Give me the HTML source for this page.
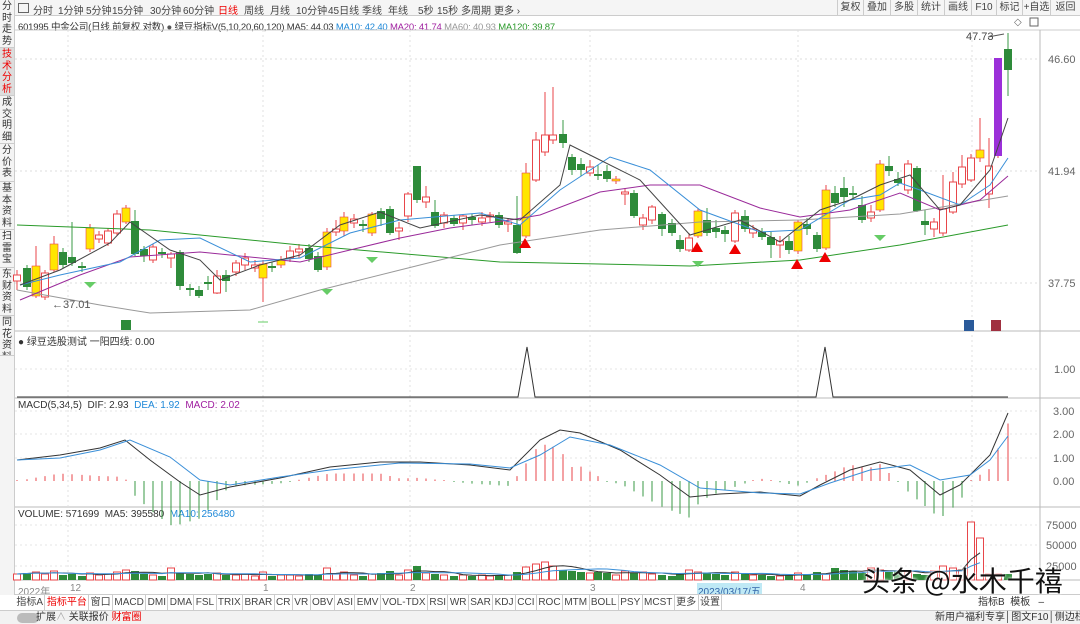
<!DOCTYPE html>
<html><head><meta charset="utf-8">
<style>
*{margin:0;padding:0;box-sizing:border-box}
body{width:1080px;height:624px;overflow:hidden;background:#fff;font-family:"Liberation Sans","Noto Sans CJK SC",sans-serif;font-size:10px;color:#333;position:relative}
.abs{position:absolute;white-space:nowrap}
#side{position:absolute;left:0;top:0;width:15px;height:595px;background:#f4f4f4;border-right:1px solid #ccc}
#side div{font-size:10px;line-height:11.5px;width:14px;text-align:center;color:#333;border-bottom:1px solid #ccc;padding-top:1px;overflow:hidden}
#top{position:absolute;left:15px;top:0;width:1065px;height:16px;background:#f5f5f5;border-bottom:1px solid #ccc}
#top span{position:absolute;top:2px;font-size:10px;color:#444;white-space:nowrap}
.btn{position:absolute;top:0;height:16px;border-left:1px solid #ccc;font-size:10px;line-height:16px;text-align:center;color:#444;white-space:nowrap;overflow:hidden}
#bot1{position:absolute;left:15px;top:594px;width:1065px;height:16px;background:#fff;border-top:1px solid #ccc}
#bot1 span{float:left;border-right:1px solid #ccc;padding:0 1.4px;line-height:15px;font-size:10px;color:#444}
#bot2{position:absolute;left:0;top:610px;width:1080px;height:14px;background:#f2f2f2;border-top:1px solid #ccc}
</style></head><body>
<div id="side">
<div style="height:48px">分时走势</div>
<div style="height:48px;color:#e00;background:#ddd">技术分析</div>
<div style="height:48px">成交明细</div>
<div style="height:38px">分价表</div>
<div style="height:48px">基本资料</div>
<div style="height:38px">扫雷宝</div>
<div style="height:48px">东财资料</div>
<div style="height:40px">同花资料</div>
</div>
<div id="top">
<span style="left:3px;top:3px;width:11px;height:10px;border:1px solid #666"></span>
<span style="left:18px">分时</span><span style="left:43px">1分钟</span><span style="left:71px">5分钟</span><span style="left:97px">15分钟</span><span style="left:135px">30分钟</span><span style="left:168px">60分钟</span><span style="left:203px;color:#e00">日线</span><span style="left:229px">周线</span><span style="left:255px">月线</span><span style="left:281px">10分钟</span><span style="left:313px">45日线</span><span style="left:347px">季线</span><span style="left:373px">年线</span><span style="left:403px">5秒</span><span style="left:422px">15秒</span><span style="left:446px">多周期</span><span style="left:479px">更多 ›</span>
<div class="btn" style="left:822px;width:26px">复权</div><div class="btn" style="left:848px;width:27px">叠加</div><div class="btn" style="left:875px;width:27px">多股</div><div class="btn" style="left:902px;width:27px">统计</div><div class="btn" style="left:929px;width:27px">画线</div><div class="btn" style="left:956px;width:25px">F10</div><div class="btn" style="left:981px;width:26px">标记</div><div class="btn" style="left:1007px;width:28px">+自选</div><div class="btn" style="left:1035px;width:30px">返回</div>
</div>
<div class="abs" style="left:18px;top:19px;font-size:9.5px;letter-spacing:-0.2px">601995 中金公司(日线 前复权 对数) <span style="color:#555">●</span> 绿豆指标V(5,10,20,60,120) MA5: 44.03 <span style="color:#1e88d8">MA10: 42.40</span> <span style="color:#a020a0">MA20: 41.74</span> <span style="color:#999">MA60: 40.93</span> <span style="color:#2a9a2a">MA120: 39.87</span></div>
<div class="abs" style="left:18px;top:333px">● 绿豆选股测试 一阳四线: 0.00</div>
<div class="abs" style="left:18px;top:400px">MACD(5,34,5)&nbsp; DIF: 2.93&nbsp; <span style="color:#1e88d8">DEA: 1.92</span>&nbsp; <span style="color:#a020a0">MACD: 2.02</span></div>
<div class="abs" style="left:18px;top:509px">VOLUME: 571699&nbsp; MA5: 395580&nbsp; <span style="color:#1e88d8">MA10: 256480</span></div>
<svg id="chart" class="abs" style="left:0;top:0" width="1080" height="624"></svg>
<div class="abs" style="left:18px;top:583px;color:#888">2022年</div>
<div class="abs" style="left:70px;top:583px;color:#888">12</div>
<div class="abs" style="left:263px;top:583px;color:#888">1</div>
<div class="abs" style="left:410px;top:583px;color:#888">2</div>
<div class="abs" style="left:590px;top:583px;color:#888">3</div>
<div class="abs" style="left:697px;top:583px;background:#bfe9f5;color:#36a;padding:0 1px">2023/03/17/五</div>
<div class="abs" style="left:800px;top:583px;color:#888">4</div>
<div id="bot1">
<span>指标A</span><span style="color:#e00">指标平台</span><span>窗口</span><span>MACD</span><span>DMI</span><span>DMA</span><span>FSL</span><span>TRIX</span><span>BRAR</span><span>CR</span><span>VR</span><span>OBV</span><span>ASI</span><span>EMV</span><span>VOL-TDX</span><span>RSI</span><span>WR</span><span>SAR</span><span>KDJ</span><span>CCI</span><span>ROC</span><span>MTM</span><span>BOLL</span><span>PSY</span><span>MCST</span><span>更多</span><span>设置</span>
<div class="abs" style="left:963px;top:0;line-height:15px">指标B&nbsp; 模板&nbsp;&nbsp; –</div>
</div>
<div id="bot2">
<div class="abs" style="left:17px;top:2px;width:22px;height:10px;border-radius:5px;background:#bbb"></div>
<div class="abs" style="left:36px;top:0;font-size:10px;line-height:13px">扩展<span style="color:#aaa">∧</span> 关联报价 <span style="color:#e00">财富圈</span></div>
<div class="abs" style="left:935px;top:0;font-size:10px;line-height:13px">新用户福利专享│图文F10│侧边栏《</div>
</div>
<div class="abs" style="left:862px;top:560px;font-size:28px;color:#111;font-family:'Noto Sans CJK SC',sans-serif;text-shadow:0 0 3px #fff,0 0 3px #fff">头条 @水木千禧</div>
<script>
var s='',NS=document.getElementById('chart');
function L(x1,y1,x2,y2,c,w,d){s+='<line x1="'+x1+'" y1="'+y1+'" x2="'+x2+'" y2="'+y2+'" stroke="'+c+'" stroke-width="'+(w||1)+'"'+(d?' stroke-dasharray="'+d+'"':'')+'/>';}
function P(pts,c,w){s+='<polyline fill="none" stroke="'+c+'" stroke-width="'+(w||1)+'" points="'+pts.map(function(p){return p.join(',')}).join(' ')+'"/>';}
function T(x,y,t,c,sz){s+='<text x="'+x+'" y="'+y+'" fill="'+(c||'#555')+'" font-size="'+(sz||11)+'" font-family="Liberation Sans,sans-serif">'+t+'</text>';}
L(15,30,1080,30,'#ccc');
[331,398,507,580].forEach(function(y){L(15,y,1080,y,'#bbb');});
L(1040,30,1040,580,'#bbb');
[59,171,283].forEach(function(y){L(15,y,1040,y,'#ddd',1,'2,3');});
[369,411,434,458,525,545,566].forEach(function(y){L(15,y,1040,y,'#e4e4e4',1,'2,3');});
[68,263,410,590,798,972].forEach(function(x){L(x,30,x,580,'#e0e0e0',1,'2,3');});
T(1048,63,'46.60','#666');T(1048,175,'41.94','#666');T(1048,287,'37.75','#666');
T(1054,373,'1.00','#666');T(1053,415,'3.00','#666');T(1053,438,'2.00','#666');T(1053,462,'1.00','#666');T(1053,485,'0.00','#666');
T(1046,529,'75000','#666');T(1046,549,'50000','#666');T(1046,570,'25000','#666');
var C=[[17,275,281,270,290,'r'],[27,268,287,265,290,'g'],[36,266,296,246,298,'y'],[45,273,297,270,300,'r'],[54,244,270,236,272,'y'],[63,252,265,248,268,'g'],[72,257,263,222,266,'g'],[82,266,268,262,272,'g'],[90,228,249,224,252,'y'],[99,235,239,231,243,'r'],[108,231,243,228,246,'r'],[117,214,233,210,236,'r'],[126,208,222,205,224,'y'],[135,221,254,210,256,'g'],[144,249,256,246,262,'g'],[153,247,260,244,263,'r'],[162,252,254,248,258,'g'],[171,254,258,252,268,'r'],[180,252,286,250,290,'g'],[190,288,290,284,296,'g'],[199,290,296,286,298,'g'],[208,282,284,276,290,'g'],[217,276,293,270,294,'r'],[226,275,281,270,292,'g'],[236,263,272,260,276,'r'],[245,258,265,253,270,'r'],[255,265,268,260,272,'r'],[263,264,278,260,302,'y'],[272,266,268,262,272,'g'],[281,260,265,256,268,'y'],[290,251,258,246,262,'r'],[299,249,252,244,258,'r'],[309,248,259,244,262,'g'],[318,256,270,252,272,'g'],[327,232,267,228,270,'y'],[336,229,232,220,236,'r'],[344,217,231,212,236,'y'],[354,219,223,214,228,'r'],[363,224,226,220,232,'g'],[372,214,233,212,236,'y'],[381,211,219,208,226,'g'],[390,209,233,206,235,'g'],[399,228,231,222,240,'r'],[408,194,216,192,222,'r'],[417,166,200,166,203,'g'],[426,197,202,186,208,'r'],[435,212,226,200,228,'g'],[444,215,223,212,228,'r'],[454,218,224,215,226,'g'],[463,216,223,214,230,'r'],[472,217,220,214,225,'g'],[482,218,222,212,226,'r'],[490,215,217,212,222,'r'],[499,215,225,212,228,'g'],[508,222,224,218,232,'r'],[517,225,253,196,254,'g'],[526,173,236,163,238,'y'],[536,140,180,132,182,'r'],[545,135,152,92,156,'r'],[553,135,140,87,144,'r'],[563,134,143,120,148,'g'],[572,157,170,154,175,'g'],[581,164,170,158,176,'g'],[590,167,173,160,176,'r'],[598,174,176,165,180,'g'],[607,171,179,165,182,'g'],[616,179,181,176,184,'y'],[625,192,194,188,205,'r'],[634,193,216,190,218,'g'],[643,218,225,214,230,'r'],[652,207,220,205,224,'r'],[662,214,229,212,236,'g'],[672,223,233,219,236,'g'],[680,240,249,235,252,'g'],[689,238,250,233,252,'r'],[698,211,236,208,238,'y'],[707,220,233,208,236,'g'],[716,228,232,220,238,'g'],[725,230,234,226,242,'g'],[735,213,241,210,243,'r'],[745,216,229,210,232,'g'],[753,229,233,225,238,'r'],[762,232,237,228,240,'g'],[771,237,245,232,258,'g'],[780,241,245,236,258,'r'],[789,241,250,236,254,'g'],[798,222,251,220,254,'y'],[807,224,229,218,235,'g'],[817,235,249,232,252,'g'],[826,190,248,185,250,'y'],[835,193,203,186,207,'g'],[844,188,197,177,207,'g'],[853,193,195,186,200,'g'],[862,205,220,196,223,'g'],[871,212,218,205,222,'r'],[880,164,210,160,212,'y'],[889,166,171,156,176,'g'],[898,179,183,172,186,'g'],[908,164,190,160,194,'r'],[917,168,211,166,212,'g'],[925,221,225,210,235,'g'],[934,222,229,218,237,'r'],[943,209,233,175,236,'r'],[953,182,212,172,214,'r'],[962,167,184,155,188,'r'],[971,158,180,154,182,'r'],[980,150,158,118,162,'y'],[989,166,194,138,208,'r'],[998,58,156,58,158,'p'],[1008,49,70,33,96,'g']];
var col={r:'#e8464a',g:'#2e8b3a',y:'#ffe600',p:'#9b30d9'};
C.forEach(function(c){var x=c[0],cl=col[c[5]];
L(x,c[3],x,c[4],c[5]=='g'?'#3a9a44':'#e8464a');
if(c[5]=='r')s+='<rect x="'+(x-3.5)+'" y="'+c[1]+'" width="7" height="'+Math.max(1,c[2]-c[1])+'" fill="#fff" stroke="#e8464a"/>';
else s+='<rect x="'+(x-4)+'" y="'+c[1]+'" width="8" height="'+Math.max(2,c[2]-c[1])+'" fill="'+cl+'"'+(c[5]=='y'?' stroke="#e8464a" stroke-width="0.6"':'')+'/>';});
P([[17,225],[150,230],[300,245],[500,262],[600,264],[690,266],[800,260],[900,245],[1008,225]],'#2a9a2a');
P([[17,290],[100,305],[150,313],[250,310],[320,290],[400,270],[500,245],[600,230],[700,222],[800,220],[900,214],[1008,196]],'#999');
P([[20,300],[80,275],[130,257],[200,252],[300,262],[350,250],[400,238],[450,228],[510,220],[540,215],[600,192],[650,185],[700,185],[760,208],[800,217],[850,210],[900,193],[940,210],[980,200],[1008,176]],'#9a2a9a');
P([[20,285],[60,275],[120,262],[160,240],[200,238],[250,262],[300,258],[350,233],[400,220],[480,213],[520,225],[560,190],[610,157],[650,170],[700,210],[760,232],[800,230],[850,200],[880,195],[900,183],[920,190],[960,205],[990,185],[1008,158]],'#3a8fd8');
P([[20,285],[60,270],[110,243],[130,222],[170,250],[200,260],[220,280],[260,265],[300,255],[340,225],[380,212],[420,228],[480,215],[520,220],[560,185],[570,145],[600,160],[640,180],[690,235],[740,220],[780,242],[820,210],[850,200],[880,185],[910,175],[940,210],[960,205],[990,170],[1008,118]],'#444');
[[525,243],[697,247],[735,249],[797,264],[825,257]].forEach(function(p){s+='<polygon points="'+(p[0]-6)+','+(p[1]+5)+' '+(p[0]+6)+','+(p[1]+5)+' '+p[0]+','+(p[1]-5)+'" fill="#e00"/>';});
[[90,284],[327,291],[372,259],[698,263],[880,237]].forEach(function(p){s+='<path d="M'+(p[0]-6)+','+(p[1]-2)+' L'+(p[0]+6)+','+(p[1]-2)+' L'+p[0]+','+(p[1]+4)+'Z" fill="#6c6"/>';});
T(52,308,'←37.01','#555');L(988,37,1004,34,'#555');T(966,40,'47.73','#444');
s+='<rect x="121" y="320" width="10" height="10" fill="#2e8b3a"/><rect x="964" y="320" width="10" height="11" fill="#2a5a9a"/><rect x="991" y="320" width="10" height="11" fill="#a03040"/>';
L(258,322,268,322,'#6c6');
T(1014,25,'◇','#666',10);s+='<rect x="1030" y="18" width="8" height="8" fill="none" stroke="#666"/>';
P([[17,397],[518,397],[527,347],[535,397],[816,397],[825,347],[833,397],[1008,397]],'#333');
function interp(arr,x){for(var i=1;i<arr.length;i++)if(x<=arr[i][0]){var a=arr[i-1],b=arr[i];return a[1]+(b[1]-a[1])*(x-a[0])/(b[0]-a[0]);}return arr[arr.length-1][1];}
var DIF=[[17,460],[60,455],[100,448],[125,440],[150,460],[180,482],[200,495],[230,487],[280,478],[330,467],[380,462],[420,462],[470,465],[510,470],[540,440],[560,430],[580,433],[620,450],[660,475],[690,497],[720,494],[760,492],[800,496],[820,485],[850,470],[880,462],[910,470],[940,495],[960,485],[990,455],[1008,413]];
var DEA=[[17,460],[60,458],[100,450],[130,440],[170,457],[200,480],[230,485],[280,477],[330,470],[400,463],[470,464],[510,468],[540,455],[570,437],[610,445],[660,465],[700,488],[760,493],[800,494],[830,483],[870,470],[910,465],[940,480],[970,475],[990,460],[1008,436]];
C.forEach(function(c){var x=c[0];var d=(interp(DEA,x)-interp(DIF,x))*2.5;if(Math.abs(d)<1)d=d<0?-1:1;L(x,481,x,481-d,d>0?'#e8464a':'#3a9a44');});
P(DIF,'#333');P(DEA,'#3a8fd8');
var vh=[6,7,8,6,9,5,6,4,7,5,6,8,10,9,6,5,4,12,7,6,5,6,7,5,5,6,4,8,4,5,5,4,6,5,12,6,8,5,4,6,7,9,5,10,14,7,6,5,4,5,4,5,4,5,5,8,13,16,18,14,10,9,8,7,8,7,5,9,7,8,6,5,4,6,10,8,7,6,5,8,6,5,5,4,4,5,7,6,8,6,12,10,9,7,12,10,8,9,8,6,5,9,14,12,10,58,42];
C.forEach(function(c,i){var h=vh[i]||6;var x=c[0];if(c[5]=='g')s+='<rect x="'+(x-4)+'" y="'+(580-h)+'" width="8" height="'+h+'" fill="#2e8b3a"/>';else s+='<rect x="'+(x-3.5)+'" y="'+(580-h)+'" width="7" height="'+h+'" fill="#fff" stroke="#e8464a"/>';});
var vl=[],vl2=[];C.forEach(function(c,i){var a=0,b=0,n=0,m=0;for(var j=Math.max(0,i-4);j<=i;j++){a+=vh[j];n++;}for(var j=Math.max(0,i-9);j<=i;j++){b+=vh[j];m++;}vl.push([c[0],580-a/n]);vl2.push([c[0],580-b/m]);});
P(vl,'#333');P(vl2,'#3a8fd8');
NS.innerHTML=s;
</script>
</body></html>
